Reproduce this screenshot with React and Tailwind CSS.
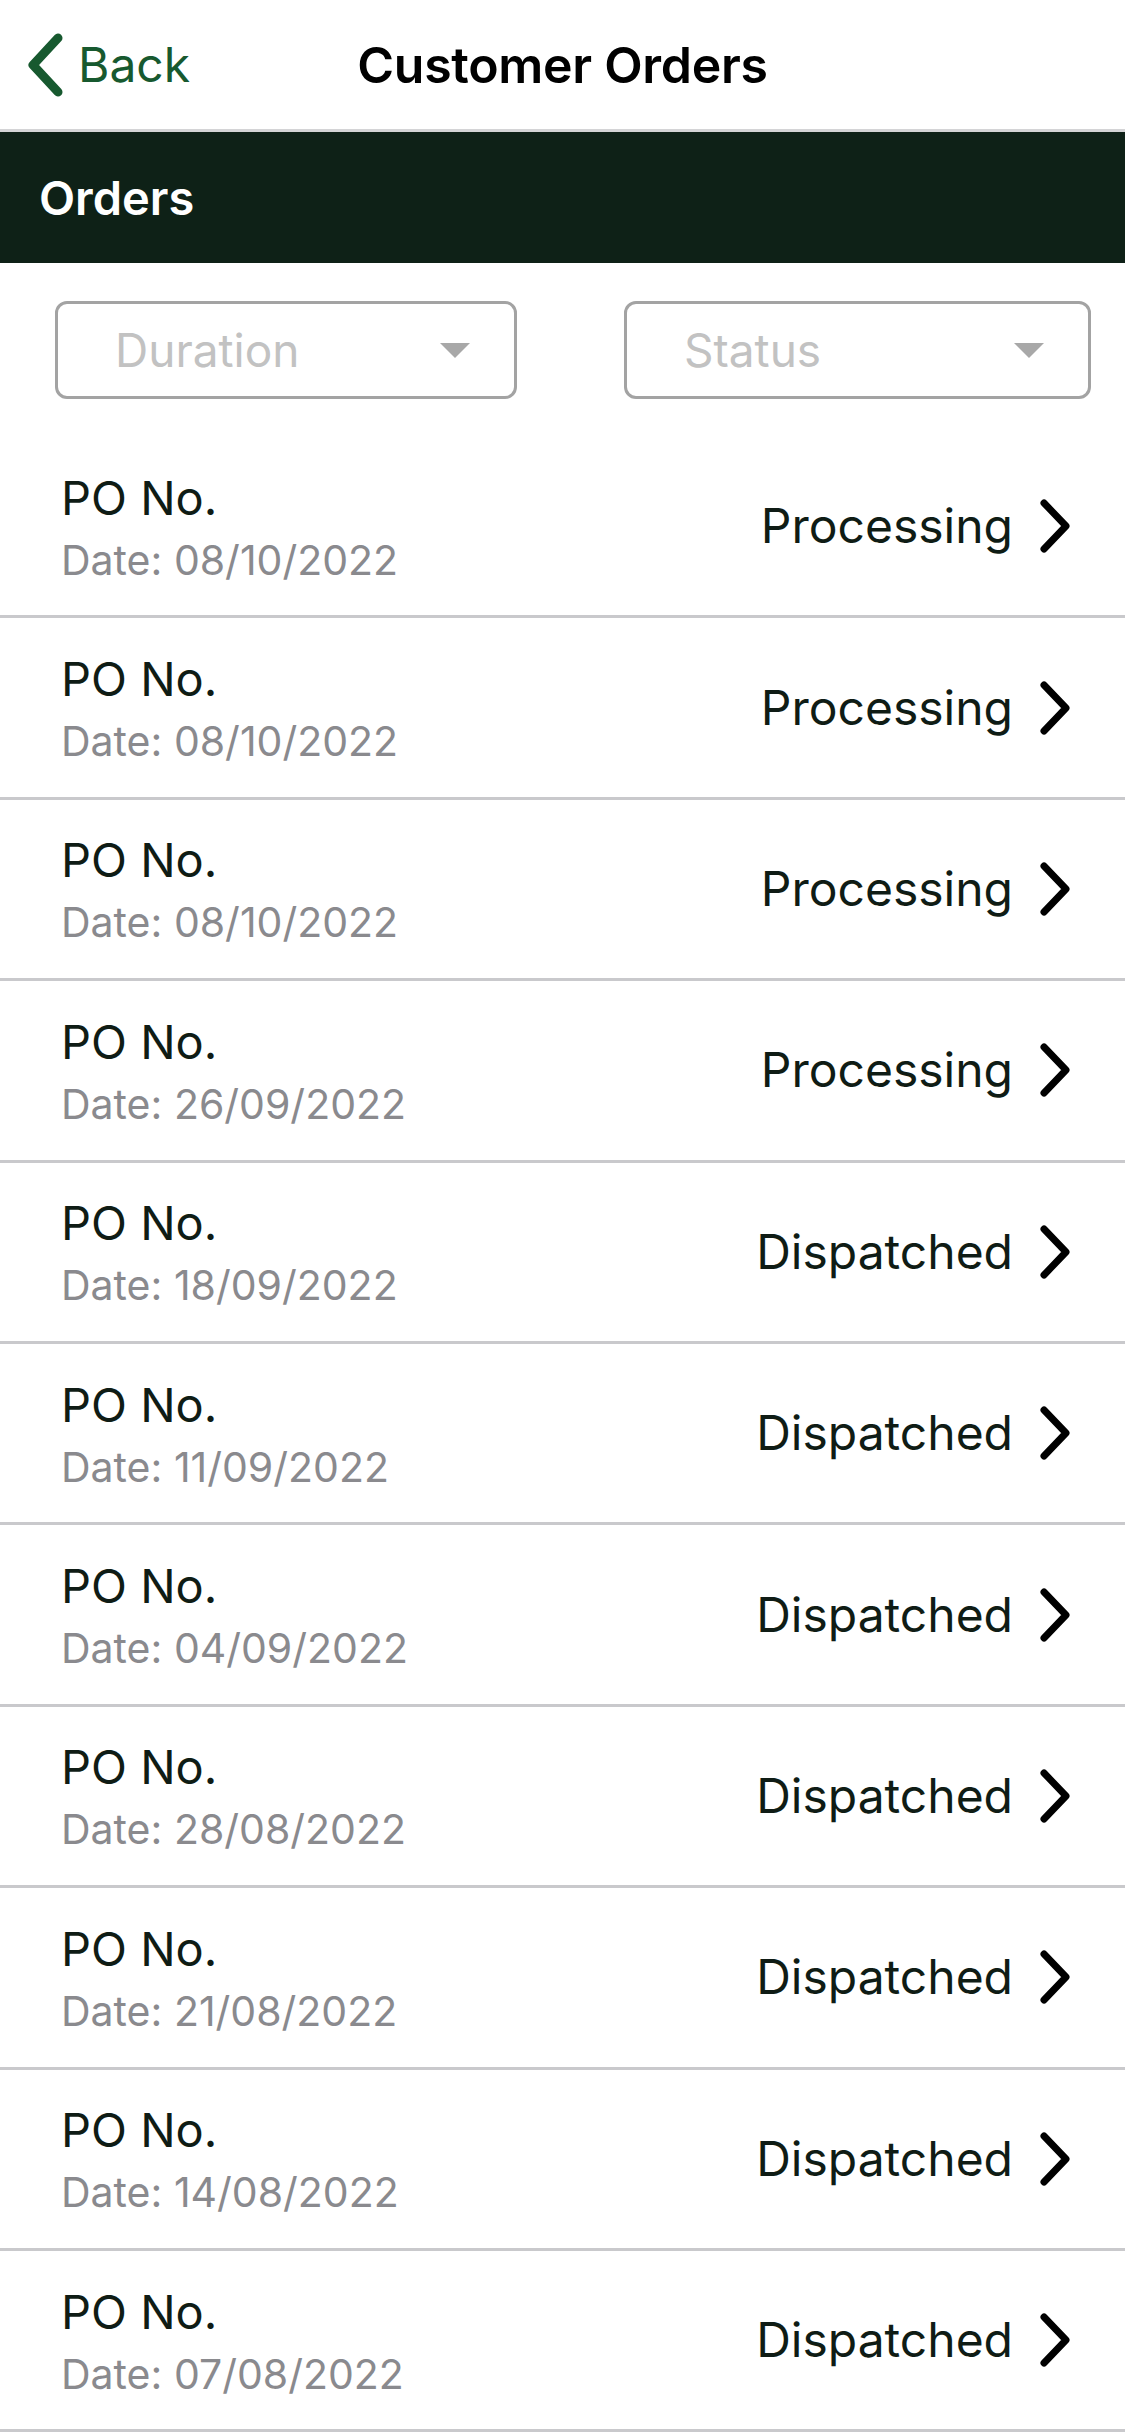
import React from 'react';

const orders = [
  { date: '08/10/2022', status: 'Processing' },
  { date: '08/10/2022', status: 'Processing' },
  { date: '08/10/2022', status: 'Processing' },
  { date: '26/09/2022', status: 'Processing' },
  { date: '18/09/2022', status: 'Dispatched' },
  { date: '11/09/2022', status: 'Dispatched' },
  { date: '04/09/2022', status: 'Dispatched' },
  { date: '28/08/2022', status: 'Dispatched' },
  { date: '21/08/2022', status: 'Dispatched' },
  { date: '14/08/2022', status: 'Dispatched' },
  { date: '07/08/2022', status: 'Dispatched' },
];

// right-pointing chevron for rows
const ChevronRight = ({ className }) => (
  <svg viewBox="0 0 32 54" className={className} fill="none">
    <path d="M5 4 L27 27 L5 50" stroke="currentColor" strokeWidth={7} strokeLinecap="round" strokeLinejoin="round" />
  </svg>
);

// back arrow in nav bar
const ChevronLeft = ({ className }) => (
  <svg viewBox="0 0 38 64" className={className} fill="none">
    <path d="M32 5 L7 32 L32 59" stroke="currentColor" strokeWidth={9} strokeLinecap="round" strokeLinejoin="round" />
  </svg>
);

const Select = ({ label, width }) => (
  <div className={`${width} h-[98px] border-[3px] border-[#a3a3a3] rounded-[12px] flex items-center justify-between pl-[57px] pr-[44px]`}>
    <span className="text-[46px] text-[#c2c2c2] leading-none">{label}</span>
    <svg viewBox="0 0 30 15" className="w-[30px] h-[15px]">
      <path d="M0 0 H30 L15 15 Z" fill="#a8a8a8" />
    </svg>
  </div>
);

const App = () => {
  return (
    <div className="w-[1125px] min-h-[2436px] bg-white font-['Inter',sans-serif]">
      {/* nav bar */}
      <header className="h-[132px] border-b-[3px] border-[#d4d4d6] grid grid-cols-[1fr_auto_1fr] items-center">
        <div className="flex items-center pl-[26px] gap-[14px] text-[#17592f]">
          <ChevronLeft className="w-[38px] h-[64px]" />
          <span className="text-[48px] leading-none">Back</span>
        </div>
        <h1 className="text-[50px] font-semibold text-black leading-none tracking-[-0.3px]">Customer Orders</h1>
        <div />
      </header>

      {/* section title */}
      <div className="h-[131px] bg-[#0e2117] flex items-center pl-[39px]">
        <h2 className="text-[47px] font-semibold text-white leading-none">Orders</h2>
      </div>

      {/* filters */}
      <div className="h-[174px] flex items-center justify-between pl-[55px] pr-[34px]">
        <Select label="Duration" width="w-[462px]" />
        <Select label="Status" width="w-[467px]" />
      </div>

      {/* order list */}
      <div>
        {orders.map((o, i) => (
          <div key={i} className="h-[181.4px] border-b-[3px] border-[#c9c9cc] flex items-center justify-between pl-[61px] pr-[54px]">
            <div className="flex flex-col gap-[19px] pt-[2px]">
              <span className="text-[47px] text-[#0f1c15] leading-none">PO No.</span>
              <span className="text-[41px] text-[#8a8a8e] leading-none">Date: {o.date}</span>
            </div>
            <div className="flex items-center gap-[26px]">
              <span className="text-[48px] text-[#0f1c15] leading-none">{o.status}</span>
              <ChevronRight className="w-[32px] h-[54px] text-black" />
            </div>
          </div>
        ))}
      </div>
    </div>
  );
};

export default App;
